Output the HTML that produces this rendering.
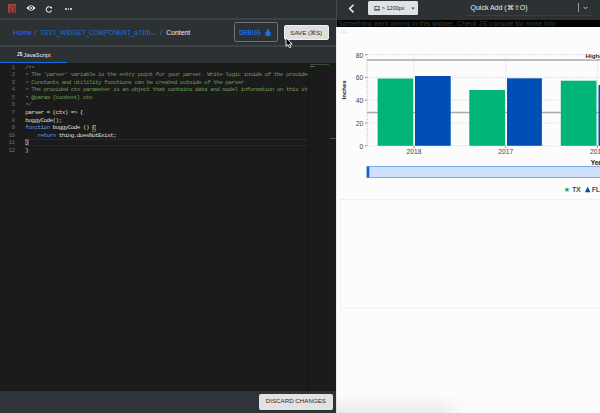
<!DOCTYPE html>
<html><head><meta charset="utf-8">
<style>
*{box-sizing:border-box;margin:0;padding:0}
html,body{width:600px;height:413px;overflow:hidden;background:#fff}
body{position:relative;font-family:"Liberation Sans",sans-serif}
.a{position:absolute}
.t{position:absolute;white-space:pre;line-height:1}
#left{left:0;top:0;width:336px;height:413px;background:#2c3134}
.mono{font-family:"Liberation Mono",monospace}
.code .ln{position:absolute;left:0;width:14.5px;text-align:right;color:#6a6a6a}
.code .cl{position:absolute;left:25.3px;color:#dedede}
.cm{color:#6a9955}
.kw{color:#569cd6}
.ast{position:relative;top:0.9px}
</style></head><body>
<div id="left" class="a">
  <!-- top icon bar -->
  <svg class="a" style="left:7.9px;top:4.1px" width="8.2" height="8.7" viewBox="0 0 8.2 8.7"><rect width="8.2" height="8.7" fill="#a93f39"/><path d="M2.2 2.4 H4.8 M6.6 2.2 V7.8 M3.4 4 Q2 4.8 2.4 6.6 M4.6 5.2 H5.4 M2.6 7.6 H5" stroke="#5a1f1c" stroke-width="0.9" fill="none"/></svg>
  <svg class="a" style="left:26px;top:4.3px" width="10" height="8" viewBox="0 0 10 8">
    <path d="M0.5 4 Q5 -1.5 9.5 4 Q5 9.5 0.5 4Z" fill="#f0f0f0"/>
    <circle cx="5" cy="4" r="2" fill="#2c3134"/><circle cx="5" cy="4" r="1" fill="#e8e8e8"/>
  </svg>
  <svg class="a" style="left:45.3px;top:5.6px" width="8" height="7" viewBox="0 0 8 7">
    <path d="M6.2 2.1 A2.7 2.7 0 1 0 6.5 4.3" fill="none" stroke="#e8e8e8" stroke-width="1.05"/>
    <path d="M4.9 0.9 L7.1 0.7 L6.9 3Z" fill="#e8e8e8"/>
  </svg>
  <div class="a" style="left:65px;top:8px;width:1.6px;height:1.6px;border-radius:50%;background:#ddd"></div>
  <div class="a" style="left:67.6px;top:8px;width:1.6px;height:1.6px;border-radius:50%;background:#ddd"></div>
  <div class="a" style="left:70.2px;top:8px;width:1.6px;height:1.6px;border-radius:50%;background:#ddd"></div>
  <div class="a" style="left:0;top:18px;width:336px;height:1.7px;background:#3d4246"></div>
  <!-- breadcrumb -->
  <div class="t" style="left:13.1px;top:29.5px;font-size:7.1px;color:#2270e6">Home</div>
  <div class="t" style="left:34px;top:29px;font-size:7px;color:#777">/</div>
  <div class="t" style="left:40.4px;top:29px;font-size:7px;color:#2270e6;transform:scaleX(0.913);transform-origin:0 0">TEXT_WIDGET_COMPONENT_a71f6</div>
  <div class="t" style="left:150.6px;top:29px;font-size:7px;color:#8a8a8a;letter-spacing:-0.45px">...</div>
  <div class="t" style="left:160px;top:29px;font-size:7px;color:#777">/</div>
  <div class="t" style="left:166.3px;top:29.5px;font-size:6.85px;color:#eee">Content</div>
  <!-- debug button -->
  <div class="a" style="left:234px;top:22.4px;width:43.5px;height:20px;border:1px solid #6f747a;border-radius:2px"></div>
  <div class="t" style="left:239.4px;top:28.9px;font-size:7px;font-weight:bold;color:#2270e6;transform:scaleX(0.855);transform-origin:0 0">DEBUG</div>
  <svg class="a" style="left:264px;top:28.6px" width="8" height="8" viewBox="0 0 8 8"><ellipse cx="4" cy="4.6" rx="2.4" ry="2.7" fill="#2270e6"/><circle cx="4" cy="1.6" r="1.3" fill="#2270e6"/><path d="M0.6 3.2 L1.8 3.8 M7.4 3.2 L6.2 3.8 M0.5 5.2 H1.6 M7.5 5.2 H6.4 M0.8 7.3 L1.9 6.4 M7.2 7.3 L6.1 6.4" stroke="#2270e6" stroke-width="0.6"/></svg>
  <!-- save button -->
  <div class="a" style="left:283.8px;top:24.6px;width:45.5px;height:15.6px;background:#dedede;border-radius:2px;border:0.6px solid #efefef"></div>
  <div class="t" style="left:290.3px;top:29.7px;font-size:6.15px;color:#2a2a2a">SAVE (⌘S)</div>
  <div class="a" style="left:0;top:45.4px;width:336px;height:1.2px;background:#3d4246"></div>
  <svg class="a" style="left:284.6px;top:37px" width="9" height="12" viewBox="0 0 9 12"><path d="M1 0.8 L1 9.3 L3 7.5 L4.4 10.6 L5.9 10 L4.6 7 L7.2 7 Z" fill="#000" stroke="#fff" stroke-width="0.9" stroke-linejoin="round"/></svg>
  <!-- tab -->
  <div class="t" style="left:17.2px;top:52.2px;font-size:5.3px;font-weight:bold;color:#f4f4f4;transform:scaleX(0.88);transform-origin:0 0">JS</div>
  <div class="t" style="left:23.6px;top:52.5px;font-size:5.8px;color:#f0f0f0">JavaScript</div>
  <div class="a" style="left:0;top:61.8px;width:67.3px;height:1.4px;background:#1c6ee6"></div>
  <!-- code -->
  <div class="a code mono" style="left:0;top:63.3px;width:336px;height:328.2px;background:#1b1b1b;font-size:6px;letter-spacing:-0.57px">
  <div class="a" style="left:25px;top:75.3px;width:283.5px;height:7.3px;border-top:0.8px solid #272727;border-bottom:0.8px solid #272727"></div>
  <div class="a" style="left:92.2px;top:61.9px;width:3.6px;height:6.6px;border:0.6px solid #5a5a5a"></div>
  <div class="a" style="left:25.3px;top:75.4px;width:3.6px;height:6.6px;border:0.6px solid #5a5a5a"></div>
  <div class="a" style="left:0;top:0;width:308.5px;height:328px;overflow:hidden">
<div class="t ln" style="top:1.50px">1</div>
<div class="t cl" style="top:1.50px"><span class="cm">/<span class="ast">*</span><span class="ast">*</span></span></div>
<div class="t ln" style="top:9.03px">2</div>
<div class="t cl" style="top:9.03px"><span class="cm"><span class="ast">*</span> The &#x27;parser&#x27; variable is the entry point for your parser. Write logic inside of the provided function.</span></div>
<div class="t ln" style="top:16.56px">3</div>
<div class="t cl" style="top:16.56px"><span class="cm"><span class="ast">*</span> Constants and utilility functions can be created outside of the parser</span></div>
<div class="t ln" style="top:24.09px">4</div>
<div class="t cl" style="top:24.09px"><span class="cm"><span class="ast">*</span> The provided ctx parameter is an object that contains data and model information on this item.</span></div>
<div class="t ln" style="top:31.62px">5</div>
<div class="t cl" style="top:31.62px"><span class="cm"><span class="ast">*</span> @param {context} ctx</span></div>
<div class="t ln" style="top:39.15px">6</div>
<div class="t cl" style="top:39.15px"><span class="cm"><span class="ast">*</span>/</span></div>
<div class="t ln" style="top:46.68px">7</div>
<div class="t cl" style="top:46.68px">parser = (ctx) =&gt; {</div>
<div class="t ln" style="top:54.21px">8</div>
<div class="t cl" style="top:54.21px">buggyCode();</div>
<div class="t ln" style="top:61.74px">9</div>
<div class="t cl" style="top:61.74px"><span class="kw">function</span> buggyCode () {</div>
<div class="t ln" style="top:69.27px">10</div>
<div class="t cl" style="top:69.27px">    <span class="kw">return</span> thing.doesNotExist;</div>
<div class="t ln" style="top:76.80px">11</div>
<div class="t cl" style="top:76.80px">}</div>
<div class="t ln" style="top:84.33px">12</div>
<div class="t cl" style="top:84.33px">}</div>
  </div>
  <div class="a" style="left:308px;top:0;width:1px;height:328px;background:#141414"></div>
  <div class="a" style="left:309.5px;top:0.7px;width:20px;height:0.6px;background:#35502f"></div>
  <div class="a" style="left:309.5px;top:2.9px;width:5px;height:0.6px;background:#606060"></div>
  <div class="a" style="left:328.5px;top:0;width:1.2px;height:328px;background:#1f1f1f"></div>
  <div class="a" style="left:329.8px;top:74.6px;width:6px;height:1px;background:#4e4e4e"></div>
  </div>
  <!-- bottom bar -->
  <div class="a" style="left:0;top:391.5px;width:336px;height:21.5px;background:#2e3437"></div>
  <div class="a" style="left:259.2px;top:394.2px;width:73.6px;height:15.5px;background:#e2e2e2;border-radius:2px"></div>
  <div class="t" style="left:265.8px;top:398.2px;font-size:6.2px;color:#2a2a2a">DISCARD CHANGES</div>
  </div>
<div id="right" class="a" style="left:336px;top:0;width:264px;height:413px;background:#fcfcfc;border-left:1px solid #e9e9e9">
  <div class="a" style="left:-1px;top:0;width:265px;height:27px;background:#42474d"></div>
  <div class="a" style="left:0;top:27px;width:1px;height:386px;background:#fff"></div>
  <div class="a" style="left:0;top:0;width:264px;height:19.5px;background:#2c3134"></div>
  <div class="a" style="left:0;top:19.5px;width:264px;height:7.5px;background:#000;overflow:hidden">
    <div class="t" style="left:0.7px;top:1.9px;font-size:7.1px;color:#3d3d3d">Something went wrong in this widget. Check JS console for more info</div>
  </div>
  <svg class="a" style="left:11px;top:3.8px" width="7" height="10" viewBox="0 0 7 10"><path d="M5.5 0.8 L1.6 4.6 L5.5 8.4" fill="none" stroke="#f2f2f2" stroke-width="1.5"/></svg>
  <div class="a" style="left:30.7px;top:1.3px;width:50px;height:14.2px;background:#dfe1e4;border-radius:1.5px"></div>
  <svg class="a" style="left:36.9px;top:5.9px" width="6" height="5" viewBox="0 0 6 5"><rect x="0.9" y="0.5" width="4.2" height="3" fill="none" stroke="#333" stroke-width="0.7"/><path d="M0 4.2H6" stroke="#333" stroke-width="0.7"/></svg>
  <div class="t" style="left:44.8px;top:5.7px;font-size:5.5px;color:#222">&gt; 1200px</div>
  <svg class="a" style="left:74px;top:7.4px" width="4" height="3" viewBox="0 0 4 3"><path d="M0.3 0.5 L3.7 0.5 L2 2.5Z" fill="#444"/></svg>
  <div class="t" style="left:133.5px;top:4.2px;font-size:7px;color:#eee">Quick Add (⌘⇧O)</div>
  <div class="a" style="left:240.6px;top:3.3px;width:0.6px;height:8.4px;background:#9a9a9a"></div>
  <svg class="a" style="left:246px;top:6.1px" width="5" height="4" viewBox="0 0 5 4"><path d="M0.5 0.8 L2.5 2.8 L4.5 0.8" fill="none" stroke="#ddd" stroke-width="0.9"/></svg>
  <div class="a" style="left:129px;top:15px;width:126px;height:0.6px;background:#3a3f44"></div>
  <div class="a" style="left:4px;top:29.8px;width:6px;height:0.6px;background:#ebebeb"></div>
  <div class="a" style="left:4px;top:32.3px;width:6px;height:0.6px;background:#ebebeb"></div>

  <svg class="a" style="left:0;top:0" width="263" height="413" viewBox="337 0 263 413">
    <g stroke="#c8c8c8" stroke-width="0.7" stroke-dasharray="1 1.3" fill="none">
      <path d="M367 54.6H600M367 77.4H600M367 100.2H600M367 123H600M367 145.8H600"/>
      <path d="M414 54.6V145.8M505.8 54.6V145.8M597.5 54.6V145.8"/>
      <path d="M367.2 54.6V145.8" stroke="#999"/>
    </g>
    <g stroke="#666" stroke-width="0.7">
      <path d="M365 54.6H367M365 77.4H367M365 100.2H367M365 123H367M365 145.8H367"/>
      <path d="M414 145.8V148M505.8 145.8V148M597.5 145.8V148"/>
    </g>
    <path d="M367 60H600" stroke="#aaa" stroke-width="1.5"/>
    <path d="M367 112.6H600" stroke="#aaa" stroke-width="1.5"/>
    <g fill="#00b576">
      <rect x="377.6" y="78.5" width="35.6" height="67.3"/>
      <rect x="469.3" y="90" width="35.7" height="55.8"/>
      <rect x="560.8" y="80.7" width="35.7" height="65.1"/>
    </g>
    <g fill="#004fb6">
      <rect x="415" y="76" width="35.7" height="69.8"/>
      <rect x="507" y="78.3" width="34.9" height="67.5"/>
      <rect x="598.5" y="85" width="10" height="60.8"/>
    </g>
    <g font-family="Liberation Sans" font-size="6.7" fill="#444" text-anchor="end">
      <text x="363.3" y="58">80</text><text x="363.3" y="80.3">60</text><text x="363.3" y="103.1">40</text><text x="363.3" y="125.9">20</text><text x="363.3" y="148.5">0</text>
    </g>
    <g font-family="Liberation Sans" font-size="6.7" fill="#444" text-anchor="middle">
      <text x="414" y="153.8">2018</text><text x="505.8" y="153.8">2017</text><text x="597.5" y="153.8">2016</text>
    </g>
    <text x="585.5" y="57.8" font-family="Liberation Sans" font-size="6.2" font-weight="bold" fill="#2a2a2a" stroke="#fdfdfd" stroke-width="1.2" paint-order="stroke">Highest</text>
    <text x="590.7" y="164.6" font-family="Liberation Sans" font-size="6.5" font-weight="bold" fill="#111">Year</text>
    <text transform="translate(345.7 89.9) rotate(-90)" text-anchor="middle" font-family="Liberation Sans" font-size="6" font-weight="bold" fill="#111">Inches</text>
    <rect x="367" y="166.6" width="240" height="10.9" fill="#cfe0fa" stroke="#5c9cf2" stroke-width="0.8"/>
    <rect x="366.8" y="166.6" width="2.5" height="10.9" fill="#1a5fd0"/>
    <path d="M567 186.9 L567.8 188.8 L569.8 188.8 L568.2 190.1 L568.8 192.1 L567 190.9 L565.2 192.1 L565.8 190.1 L564.2 188.8 L566.2 188.8Z" fill="#00b576"/>
    <text x="572.2" y="191.7" font-family="Liberation Sans" font-size="6.5" fill="#1a1a1a" stroke="#1a1a1a" stroke-width="0.15">TX</text>
    <path d="M584.9 192.2 L587.65 186.6 L590.4 192.2Z" fill="#004fb6"/>
    <text x="592.1" y="191.7" font-family="Liberation Sans" font-size="6.5" fill="#1a1a1a" stroke="#1a1a1a" stroke-width="0.15">FL</text>
    <rect x="340.5" y="199.6" width="300" height="108.4" fill="none" stroke="#f3cad0" stroke-width="0.7" stroke-dasharray="1 1.2"/>
  </svg>
  <div class="a" style="left:-1px;top:395px;width:130px;height:18px;background:linear-gradient(to bottom,rgba(0,0,0,0),rgba(0,0,0,0.075));-webkit-mask-image:linear-gradient(to right,#000 78%,transparent)"></div>
</div>
</body></html>
